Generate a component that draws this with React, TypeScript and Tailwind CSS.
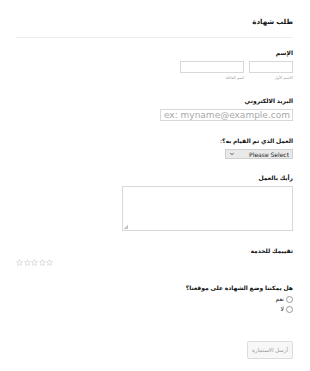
import { ChevronDown } from 'lucide-react';

const font = { fontFamily: '"Liberation Sans", "DejaVu Sans", Arial, sans-serif' };
const wide = { fontFamily: '"DejaVu Sans", Verdana, sans-serif' };

function Label({ children }: { children: React.ReactNode }) {
  return <div className="text-[6px] font-bold leading-[8px] text-[#111]">{children}</div>;
}

function Star() {
  return (
    <svg width="7" height="7" viewBox="0 0 24 24" fill="none" stroke="#bcbcbc" strokeWidth="1.6">
      <polygon points="12,2 15,9 22,9.5 16.5,14.5 18.5,22 12,18 5.5,22 7.5,14.5 2,9.5 9,9" />
    </svg>
  );
}

export default function App() {
  return (
    <div dir="rtl" className="w-[310px] h-[371px] bg-white text-[#111]" style={font}>
      <div className="pl-[16px] pr-[17px]">
        {/* header */}
        <div className="pt-[17px] pb-[10px] border-b border-[#ececec]">
          <h1 className="text-[7px] font-bold leading-[10px] text-[#111]">طلب شهادة</h1>
        </div>

        {/* name */}
        <div className="mt-[11px]">
          <Label>الإسم</Label>
          <div className="mt-[4px] flex gap-[5px]">
            <div className="flex flex-col">
              <div className="w-[44px] h-[12px] border border-[#d8d8d8] bg-white" />
              <span className="mt-[2px] text-[4px] leading-[5px] text-[#a0a0a0]">الاسم الأول</span>
            </div>
            <div className="flex flex-col">
              <div className="w-[64px] h-[12px] border border-[#d8d8d8] bg-white" />
              <span className="mt-[2px] text-[4px] leading-[5px] text-[#a0a0a0]">اسم العائلة</span>
            </div>
          </div>
        </div>

        {/* email */}
        <div className="mt-[17px]">
          <Label>البريد الالكتروني</Label>
          <div className="mt-[4px] w-[133px] h-[12px] border border-[#d8d8d8] flex items-center px-[2px]">
            <span dir="ltr" className="text-[9px] leading-[10px] text-[#a9a9a9]" style={wide}>
              ex: myname@example.com
            </span>
          </div>
        </div>

        {/* select */}
        <div className="mt-[16px]">
          <Label>العمل الذي تم القيام به؟:</Label>
          <div className="mt-[4px] w-[68px] h-[10px] bg-[#e9e9e9] border border-[#d0d0d0] flex items-center justify-between px-[3px]">
            <span dir="ltr" className="text-[6px] leading-[7px] text-[#222]" style={wide}>Please Select</span>
            <ChevronDown size={6} strokeWidth={3} color="#333" />
          </div>
        </div>

        {/* textarea */}
        <div className="mt-[15px]">
          <Label>رأيك بالعمل</Label>
          <div className="relative mt-[4px] w-[171px] h-[45px] border border-[#d8d8d8]">
            <div className="absolute left-[1px] bottom-[1px] w-[4px] h-[4px] bg-[linear-gradient(135deg,transparent_50%,#c8c8c8_50%)]" />
          </div>
        </div>

        {/* rating */}
        <div className="mt-[16px]">
          <Label>تقييمك للخدمة</Label>
          <div dir="ltr" className="mt-[4px] flex justify-start gap-[0.5px]">
            <Star />
            <Star />
            <Star />
            <Star />
            <Star />
          </div>
        </div>

        {/* radios */}
        <div className="mt-[18px]">
          <Label>هل يمكننا وضع الشهادة على موقعنا؟</Label>
          <div className="mt-[3px] flex flex-col gap-[2px]">
            {['نعم', 'لا'].map((t) => (
              <div key={t} className="flex items-center gap-[2px]">
                <span className="w-[7px] h-[7px] rounded-full border border-[#999] bg-white" />
                <span className="text-[6px] leading-[8px] text-[#222]">{t}</span>
              </div>
            ))}
          </div>
        </div>

        {/* submit */}
        <div className="mt-[22px]">
          <button className="w-[46px] h-[18px] border border-[#dcdcdc] rounded-[2px] bg-[#f7f7f7] text-[5.5px] text-[#999]">
            أرسل الاستمارة
          </button>
        </div>
      </div>
    </div>
  );
}
